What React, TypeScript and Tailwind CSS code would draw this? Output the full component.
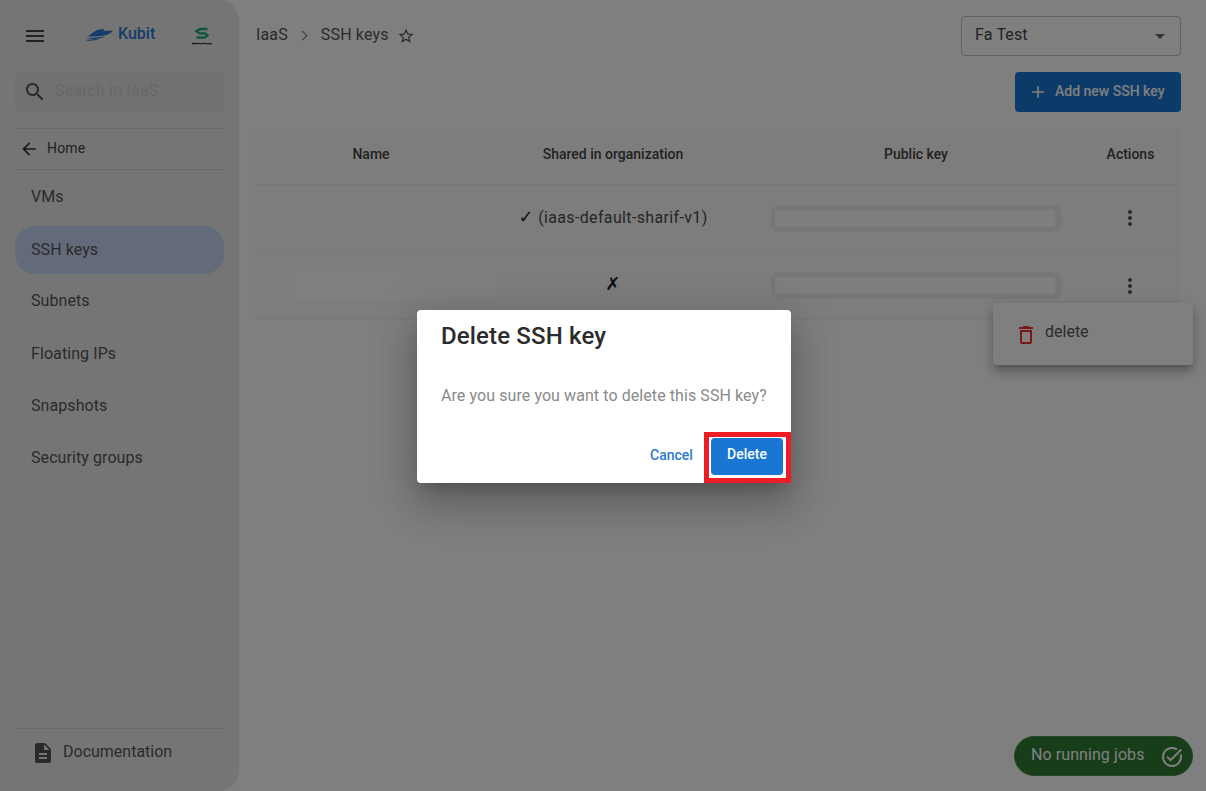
const font = { fontFamily: "Roboto, 'Noto Sans', sans-serif" };

function Icon({ d, className }: { d: string; className: string }) {
  return (
    <svg viewBox="0 0 24 24" fill="currentColor" className={className}>
      <path d={d} />
    </svg>
  );
}

const icons = {
  menu: "M3 18h18v-2H3v2zm0-5h18v-2H3v2zm0-7v2h18V6H3z",
  search:
    "M15.5 14h-.79l-.28-.27C15.41 12.59 16 11.11 16 9.5 16 5.91 13.09 3 9.5 3S3 5.91 3 9.5 5.91 16 9.5 16c1.61 0 3.09-.59 4.23-1.57l.27.28v.79l5 4.99L20.49 19l-4.99-5zm-6 0C7.01 14 5 11.99 5 9.5S7.01 5 9.5 5 14 7.01 14 9.5 11.99 14 9.5 14z",
  back: "M20 11H7.83l5.59-5.59L12 4l-8 8 8 8 1.41-1.41L7.83 13H20v-2z",
  more: "M12 8c1.1 0 2-.9 2-2s-.9-2-2-2-2 .9-2 2 .9 2 2 2zm0 2c-1.1 0-2 .9-2 2s.9 2 2 2 2-.9 2-2-.9-2-2-2zm0 6c-1.1 0-2 .9-2 2s.9 2 2 2 2-.9 2-2-.9-2-2-2z",
  star: "M22 9.24l-7.19-.62L12 2 9.19 8.63 2 9.24l5.46 4.73L5.82 21 12 17.27 18.18 21l-1.63-7.03L22 9.24zM12 15.4l-3.76 2.27 1-4.28-3.32-2.88 4.38-.38L12 6.1l1.71 4.04 4.38.38-3.32 2.88 1 4.28L12 15.4z",
  doc: "M14 2H6c-1.1 0-1.99.9-1.99 2L4 20c0 1.1.89 2 1.99 2H18c1.1 0 2-.9 2-2V8l-6-6zm2 16H8v-2h8v2zm0-4H8v-2h8v2zm-3-5V3.5L18.5 9H13z",
  trash: "M6 19c0 1.1.9 2 2 2h8c1.1 0 2-.9 2-2V7H6v12zM8 9h8v10H8V9zm7.5-5l-1-1h-5l-1 1H5v2h14V4z",
  plus: "M19 13h-6v6h-2v-6H5v-2h6V5h2v6h6v2z",
  taskAlt:
    "M22 5.18 10.59 16.6l-4.24-4.24 1.41-1.41 2.83 2.83 10-10L22 5.18zm-2.21 5.04c.13.57.21 1.17.21 1.78 0 4.42-3.58 8-8 8s-8-3.58-8-8 3.58-8 8-8c1.58 0 3.04.46 4.28 1.25l1.44-1.44C16.1 2.67 14.13 2 12 2 6.48 2 2 6.48 2 12s4.48 10 10 10 10-4.48 10-10c0-1.19-.22-2.33-.6-3.39l-1.61 1.61z",
};

const navItems = ["VMs", "SSH keys", "Subnets", "Floating IPs", "Snapshots", "Security groups"];

function BoatLogo() {
  return (
    <svg viewBox="0 0 28 12" className="w-[28px] h-[12px] text-[#2a7ad0]" fill="currentColor">
      <path d="M8.5 3.2 C12 .8 15.5 -.2 19.5 .2 L18 2 L28 1.6 C26 5 21.5 6.6 16 7 C11 7.5 6.5 7.2 2.5 8 C4.5 6 6.5 4.6 8.5 3.2Z" />
      <path d="M1 10.4 C6 8.2 14 8.4 20.5 7.2 C15.5 10 8 10 1 10.4Z" />
      <path d="M0 12 C4 10.4 10 10.4 15 9.8 C11 11.6 5 11.8 0 12Z" />
    </svg>
  );
}

function SLogo() {
  return (
    <svg viewBox="0 0 22 20" className="w-[22px] h-[20px]" fill="none">
      <path d="M16.5 2 H9 L5.5 4.2 L8.5 6.4 H14 L16.5 8.4 L13.5 10.6 H5.5" stroke="#1fa67f" strokeWidth="2.4" />
      <path d="M1 17 C3 15.5 4 17.5 6 16.5 C8 15.5 9 17.5 11 16.5 C13 15.5 15 17.5 17 16.5 L21 17" stroke="#222" strokeWidth="1.2" />
    </svg>
  );
}

function Sidebar() {
  return (
    <aside className="w-[239px] h-[791px] shrink-0 bg-[#ebebeb] rounded-r-[20px] flex flex-col px-[15px]">
      <div className="h-[72px] relative flex items-center shrink-0">
        <Icon d={icons.menu} className="w-6 h-6 ml-[8px] text-[#444]" />
        <div className="ml-[38px] flex items-center gap-[5px] mb-[2px]">
          <BoatLogo />
          <span className="text-[16px] font-medium text-[#2a7ad0] -mt-[3px]">Kubit</span>
        </div>
        <div className="ml-[36px] mt-[1px]">
          <SLogo />
        </div>
      </div>
      <div className="h-10 shrink-0 rounded bg-[#e3e3e3] flex items-center pl-[8px]">
        <Icon d={icons.search} className="w-6 h-6 text-[#555]" />
        <span className="ml-[8px] text-[16px] tracking-[0.15px] text-[#cfcfcf] -mt-[2px]">Search in IaaS</span>
      </div>
      <div className="mt-4 h-[42px] shrink-0 border-y border-[#d4d4d4] flex items-center pl-[4px]">
        <Icon d={icons.back} className="w-[20px] h-[20px] text-[#333]" />
        <span className="ml-[8px] text-[14px] tracking-[0.15px] text-[#444] -mt-[2px]">Home</span>
      </div>
      <nav className="mt-[3px] flex flex-col gap-[4.2px]">
        {navItems.map((item) => (
          <div
            key={item}
            className={`h-[48px] flex items-center pl-4 text-[16px] tracking-[0.08px] text-[#555] rounded-[20px] ${
              item === "SSH keys" ? "bg-[#c6d7f5] translate-y-px" : ""
            }`}
          >
            {item}
          </div>
        ))}
      </nav>
      <div className="mt-auto h-[63px] shrink-0 border-t border-[#d4d4d4] flex items-start pt-[12px] pl-[16px]">
        <Icon d={icons.doc} className="w-6 h-6 text-[#555]" />
        <span className="ml-[8px] text-[16px] text-[#555] -mt-[1px]">Documentation</span>
      </div>
    </aside>
  );
}

function KeyField() {
  return (
    <div className="w-[291px] h-[27px] rounded-[8px] bg-[#eeeeee] pl-[4px] pr-[7px] py-[5px] mx-auto">
      <div className="h-full rounded-[3px] bg-[#fcfcfc]" />
    </div>
  );
}

function Row({ mark, label, nameBox, height }: { mark: string; label?: string; nameBox?: boolean; height: string }) {
  return (
    <div className={`grid grid-cols-[232px_252px_355px_87px] items-center border-b border-[#f0f0f0] bg-[#fbfbfb] ${height}`}>
      <div className="pl-[40px]">{nameBox && <div className="w-[200px] h-[30px] rounded bg-white" />}</div>
      <div className="text-center text-[16px] tracking-[0.35px] text-[#4d4d4d] -mt-[1px]">
        <span className="font-['DejaVu_Sans'] text-[18px] leading-none text-[#222] font-bold">{mark}</span>
        {label && <span> {label}</span>}
      </div>
      <div className="pr-[1px]">
        <KeyField />
      </div>
      <div className="flex justify-center pr-[15px]">
        <Icon d={icons.more} className="w-6 h-6 text-[#555]" />
      </div>
    </div>
  );
}

function Main() {
  return (
    <main className="flex-1 pl-[16px] pr-[25px]">
      <div className="h-[72px] flex items-start justify-between">
        <div className="flex items-center pt-[23px] text-[16px] tracking-[0.15px] text-[#555]">
          <span className="ml-px">IaaS</span>
          <span className="ml-[11px] mr-[15px] w-[7px] h-[7px] border-t border-r border-[#777] rotate-45" />
          <span>SSH keys</span>
          <Icon d={icons.star} className="w-[18px] h-[18px] ml-[8px] text-[#555] mt-[2px]" />
        </div>
        <div className="mt-[16px] w-[220px] h-[40px] border border-[#c4c4c4] rounded flex items-center justify-between px-[13px]">
          <span className="text-[16px] tracking-[0.15px] text-[#444] -mt-[2px]">Fa Test</span>
          <span className="w-0 h-0 border-x-[5px] border-x-transparent border-t-[5px] border-t-[#666] mr-[2px]" />
        </div>
      </div>
      <div className="flex justify-end">
        <button className="w-[166px] h-10 rounded bg-[#1976d2] text-white text-[14px] font-medium flex items-center pl-[13px]">
          <Icon d={icons.plus} className="w-[20px] h-[20px] mr-[7px]" />
          <span className="-mt-[2px]">Add new SSH key</span>
        </button>
      </div>
      <div className="mt-4">
        <div className="h-[57px] grid grid-cols-[232px_252px_355px_87px] items-center bg-[#fbfbfb] border-b border-[#eeeeee] text-[14px] font-medium text-[#444] text-center">
          <div className="-mt-[3px]">Name</div>
          <div className="-mt-[3px]">Shared in organization</div>
          <div className="-mt-[3px] pr-[1px]">Public key</div>
          <div className="-mt-[3px] pr-[14px]">Actions</div>
        </div>
        <Row mark="✓" label="(iaas-default-sharif-v1)" height="h-[67px]" />
        <Row mark="✗" nameBox height="h-[68px]" />
      </div>
    </main>
  );
}

function RowMenu() {
  return (
    <div className="absolute left-[993px] top-[303px] w-[200px] h-[62px] bg-white rounded shadow-[0_5px_5px_-3px_rgba(0,0,0,0.2),0_8px_10px_1px_rgba(0,0,0,0.14),0_3px_14px_2px_rgba(0,0,0,0.12)] flex items-center pl-[21px]">
      <Icon d={icons.trash} className="w-6 h-6 text-[#f03030] mt-[2px]" />
      <span className="ml-[7px] text-[16px] text-[#555] -mt-[4px]">delete</span>
    </div>
  );
}

function JobsPill() {
  return (
    <div className="absolute left-[1014px] top-[736px] w-[179px] h-[40px] rounded-full bg-[#2e7d32] border border-[#4a8f4e] text-white flex items-center pl-[16px]">
      <span className="text-[16px] tracking-[0.08px] -mt-[3px]">No running jobs</span>
      <Icon d={icons.taskAlt} className="absolute right-[8px] top-[8px] w-[24px] h-[24px]" />
    </div>
  );
}

function DeleteDialog() {
  return (
    <div className="relative w-[374px] h-[173px] bg-white rounded shadow-[0_11px_15px_-7px_rgba(0,0,0,0.2),0_24px_38px_3px_rgba(0,0,0,0.14),0_9px_46px_8px_rgba(0,0,0,0.12)] px-6">
      <h2 className="text-[24px] font-medium tracking-[0.15px] text-[#2b2b2b] leading-[32px] pt-[10px] h-[42px] box-content">Delete SSH key</h2>
      <p className="mt-[22px] text-[16px] tracking-[0.08px] text-[#8a8a8a] leading-6 whitespace-nowrap">Are you sure you want to delete this SSH key?</p>
      <div className="absolute left-[233px] top-[135px] text-[14px] font-medium text-[#2a7ad0]">Cancel</div>
      <button className="absolute left-[294px] top-[128px] w-[72px] h-[37px] pb-[3px] rounded bg-[#1976d2] text-white text-[14px] font-medium">
        Delete
      </button>
      <div className="absolute left-[287px] top-[122px] w-[87px] h-[51px] border-[5px] border-[#ee1c25]" />
    </div>
  );
}

export default function App() {
  return (
    <div className="relative w-[1206px] h-[791px] overflow-hidden bg-white flex" style={font}>
      <Sidebar />
      <Main />
      <RowMenu />
      <JobsPill />
      <div className="absolute inset-0 bg-black/50 flex items-center justify-center pl-[2px] pt-[1px]">
        <DeleteDialog />
      </div>
    </div>
  );
}
